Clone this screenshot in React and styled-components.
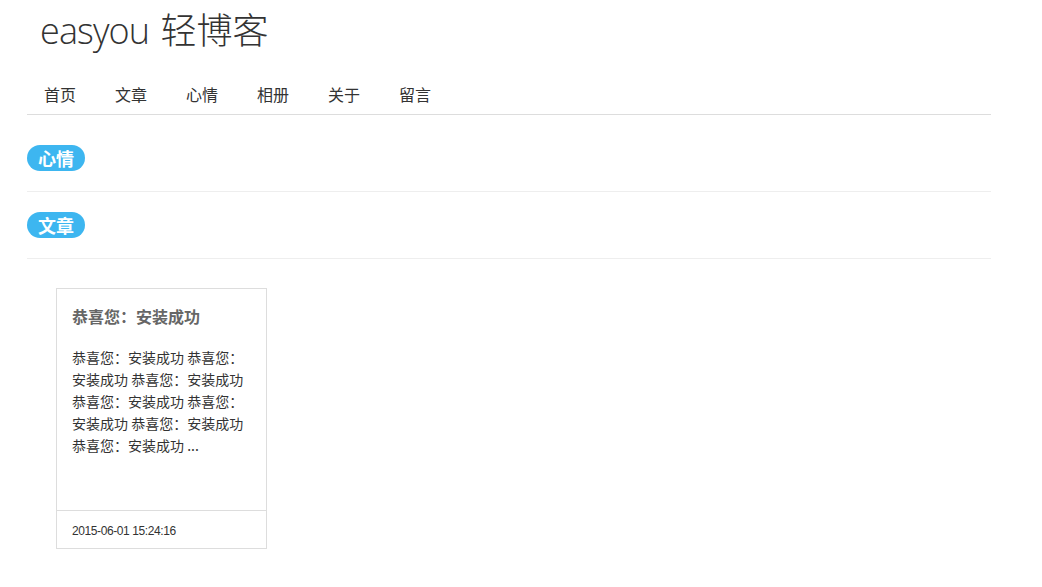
import React from "react";
import styled, { createGlobalStyle } from "styled-components";

const Global = createGlobalStyle`
  html, body { margin: 0; padding: 0; background: #fff; }
  body { font-family: "Open Sans", "Noto Sans CJK SC", sans-serif; color: #333; }
`;

const Page = styled.div`
  width: 964px;
  margin-left: 27px;
`;

const Header = styled.header`
  padding: 7px 0 0 13px;
  height: 62px;
`;

const Logo = styled.h1`
  margin: 0;
  font-size: 36px;
  font-weight: 300;
  line-height: 48px;
  color: #333;
  font-family: "Open Sans", "Noto Sans CJK SC", sans-serif;
`;

const LogoLatin = styled.span`
  letter-spacing: -0.9px;
  margin-right: 2px;
`;

const Nav = styled.nav`
  display: flex;
  gap: 39px;
  padding: 0 0 10px 17px;
  height: 46px;
  box-sizing: border-box;
  align-items: flex-end;
  border-bottom: 1px solid #ddd;
`;

const NavItem = styled.a`
  font-size: 16px;
  color: #333;
  text-decoration: none;
  font-family: "Noto Sans CJK SC", sans-serif;
  line-height: 20px;
`;

const Sections = styled.div`
  margin-top: 10px;
`;

const Section = styled.section`
  height: 67px;
  display: flex;
  align-items: flex-start;
  padding-top: 20px;
  border-bottom: 1px solid #eee;
  box-sizing: border-box;
`;

const Badge = styled.span`
  display: inline-flex;
  align-items: center;
  justify-content: center;
  width: 58px;
  height: 26px;
  border-radius: 13px;
  background: #3db6f0;
  color: #fff;
  font-weight: 700;
  font-size: 18px;
  font-family: "Noto Sans CJK SC", sans-serif;
`;

const Cards = styled.div`
  padding: 29px 0 0 29px;
  display: flex;
`;

const Card = styled.article`
  width: 211px;
  height: 261px;
  border: 1px solid #ddd;
  box-sizing: border-box;
  display: flex;
  flex-direction: column;
`;

const CardBody = styled.div`
  flex: 1;
  padding: 14px 15px 0 15px;
`;

const CardTitle = styled.h3`
  margin: 0;
  font-size: 16px;
  font-weight: 700;
  color: #666;
  line-height: 26px;
  font-family: "Noto Sans CJK SC", sans-serif;
`;

const CardText = styled.p`
  margin: 17px 0 0;
  font-size: 14px;
  line-height: 22px;
  color: #333;
  font-family: "Noto Sans CJK SC", sans-serif;
`;

const CardFooter = styled.div`
  height: 38px;
  border-top: 1px solid #ddd;
  display: flex;
  align-items: center;
  padding: 3px 15px 0;
  box-sizing: border-box;
  font-size: 12px;
  letter-spacing: -0.4px;
  color: #333;
  font-family: "Liberation Sans", sans-serif;
`;

const items = ["首页", "文章", "心情", "相册", "关于", "留言"];

export default function App() {
  return (
    <>
      <Global />
      <Page>
        <Header>
          <Logo>
            <LogoLatin>easyou</LogoLatin> 轻博客
          </Logo>
        </Header>
        <Nav>
          {items.map((t) => (
            <NavItem key={t} href="#">{t}</NavItem>
          ))}
        </Nav>
        <Sections>
          <Section>
            <Badge>心情</Badge>
          </Section>
          <Section>
            <Badge>文章</Badge>
          </Section>
        </Sections>
        <Cards>
          <Card>
            <CardBody>
              <CardTitle>恭喜您：安装成功</CardTitle>
              <CardText>
                恭喜您：安装成功 恭喜您：安装成功 恭喜您：安装成功 恭喜您：安装成功 恭喜您：安装成功 恭喜您：安装成功 恭喜您：安装成功 ...
              </CardText>
            </CardBody>
            <CardFooter>2015-06-01 15:24:16</CardFooter>
          </Card>
        </Cards>
      </Page>
    </>
  );
}
